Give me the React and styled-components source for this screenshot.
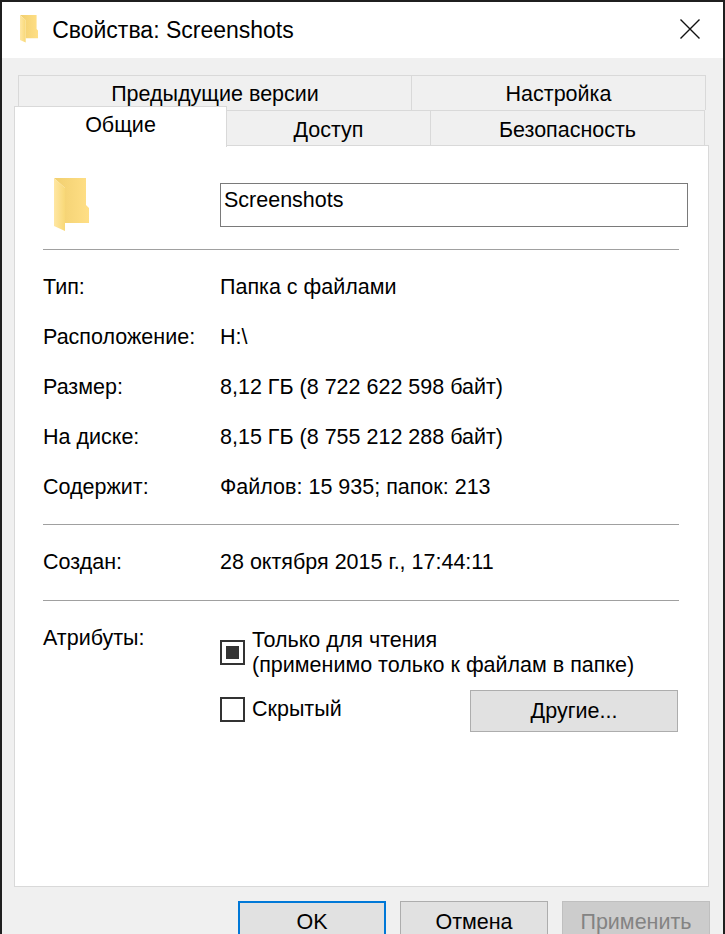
import styled, { createGlobalStyle } from "styled-components";

const GlobalStyle = createGlobalStyle`
  html, body {
    margin: 0;
    padding: 0;
    background: #1f1f1f;
  }
  * {
    box-sizing: border-box;
  }
`;

const App = () => {
  return (
    <>
      <GlobalStyle />
      <Screen>
        <Window>
          <TitleBar>
            <TitleGroup>
              <FolderIcon size={28} />
              <Title>Свойства: Screenshots</Title>
            </TitleGroup>
            <CloseIcon viewBox="0 0 20 20">
              <path d="M0.5 0.5 L19.5 19.5 M19.5 0.5 L0.5 19.5" stroke="#111" strokeWidth="1.4" fill="none" />
            </CloseIcon>
          </TitleBar>
          <Body>
            <BackTabs>
              <BackTab $first>Предыдущие версии</BackTab>
              <BackTab>Настройка</BackTab>
            </BackTabs>
            <FrontTabs>
              <ActiveTab>Общие</ActiveTab>
              <FrontTab>Доступ</FrontTab>
              <FrontTab $last>Безопасность</FrontTab>
            </FrontTabs>
            <Panel>
              <NameRow>
                <IconCell>
                  <FolderIcon size={54} />
                </IconCell>
                <NameField>Screenshots</NameField>
              </NameRow>
              <Divider />
              <InfoList>
                {info.map((row) => (
                  <InfoRow key={row.label}>
                    <span>{row.label}</span>
                    <span>{row.value}</span>
                  </InfoRow>
                ))}
              </InfoList>
              <Divider />
              <CreatedRow>
                <span>Создан:</span>
                <span>28 октября 2015 г., 17:44:11</span>
              </CreatedRow>
              <Divider />
              <Attributes>
                <AttrLabel>Атрибуты:</AttrLabel>
                <AttrOptions>
                  <ReadOnlyRow>
                    <CheckBox $mixed />
                    <CheckText>
                      Только для чтения
                      <br />
                      (применимо только к файлам в папке)
                    </CheckText>
                  </ReadOnlyRow>
                  <HiddenRow>
                    <HiddenCheck />
                    <HiddenText>Скрытый</HiddenText>
                    <OtherButton>Другие...</OtherButton>
                  </HiddenRow>
                </AttrOptions>
              </Attributes>
            </Panel>
            <Footer>
              <DialogButton $focused>OK</DialogButton>
              <DialogButton>Отмена</DialogButton>
              <DialogButton $disabled>Применить</DialogButton>
            </Footer>
          </Body>
        </Window>
      </Screen>
    </>
  );
};

const FolderIcon = ({ size }) => (
  <svg width={size * 35 / 54} height={size} viewBox="0 0 35 54">
    <defs>
      <linearGradient id={`back${size}`} x1="0" y1="0" x2="1" y2="0">
        <stop offset="0" stopColor="#f1cf6f" />
        <stop offset="1" stopColor="#ffdf86" />
      </linearGradient>
      <linearGradient id={`front${size}`} x1="0" y1="0" x2="1" y2="0">
        <stop offset="0" stopColor="#ffe7a3" />
        <stop offset="1" stopColor="#f8d877" />
      </linearGradient>
    </defs>
    <path d="M0 0 H32 V27 L35 30 V45 H11 V10 Z" fill={`url(#back${size})`} />
    <path d="M0 0 L11 10 V53 L0 48 Z" fill={`url(#front${size})`} />
  </svg>
);

const Screen = styled.div`
  width: 725px;
  height: 934px;
  overflow: hidden;
  padding: 2px 2px 0;
  background: #1f1f1f;
  font-family: "Liberation Sans", Arial, sans-serif;
  font-size: 21.5px;
  color: #000;
`;

const Window = styled.div`
  display: flex;
  flex-direction: column;
  height: 100%;
  background: #f0f0f0;
`;

const TitleBar = styled.div`
  display: flex;
  align-items: center;
  justify-content: space-between;
  flex: none;
  height: 56px;
  padding: 0 23px 2px 18px;
  background: #fff;
`;

const TitleGroup = styled.div`
  display: flex;
  align-items: center;
  gap: 14px;
`;

const Title = styled.span`
  margin-top: 3px;
  font-size: 23px;
`;

const CloseIcon = styled.svg`
  width: 20px;
  height: 20px;
`;

const Body = styled.div`
  display: flex;
  flex-direction: column;
  flex: 1;
  padding: 17px 14px 0 12px;
`;

const BackTabs = styled.div`
  display: grid;
  grid-template-columns: 394px 294px;
  height: 35px;
  margin-left: 4px;
`;

const BackTab = styled.div`
  display: flex;
  align-items: center;
  justify-content: center;
  padding-top: 3px;
  border: 1px solid #d9d9d9;
  border-left-width: ${({ $first }) => ($first ? "1px" : "0")};
  border-bottom: 0;
`;

const FrontTabs = styled.div`
  display: grid;
  grid-template-columns: 213px 204px 274px;
  height: 35px;
`;

const FrontTab = styled.div`
  display: flex;
  align-items: center;
  justify-content: center;
  padding-top: 2px;
  border-top: 1px solid #d9d9d9;
  border-right: 1px solid #d9d9d9;
`;

const ActiveTab = styled.div`
  position: relative;
  z-index: 1;
  display: flex;
  align-items: center;
  justify-content: center;
  height: 41px;
  margin-top: -4px;
  padding-bottom: 3px;
  background: #fff;
  border: 1px solid #d9d9d9;
  border-bottom: 0;
`;

const Panel = styled.div`
  flex: none;
  height: 742px;
  padding: 0 29px 0 28px;
  background: #fff;
  border: 1px solid #d9d9d9;
`;

const NameRow = styled.div`
  display: grid;
  grid-template-columns: 177px 468px;
  height: 103px;
  padding-top: 37px;
`;

const IconCell = styled.div`
  margin: -5px 0 0 11px;
`;

const NameField = styled.div`
  height: 44px;
  padding: 4px 3px;
  line-height: 24px;
  border: 1px solid #7a7a7a;
`;

const Divider = styled.div`
  height: 1px;
  width: 636px;
  background: #a0a0a0;
`;

const InfoList = styled.div`
  display: flex;
  flex-direction: column;
  padding: 12px 0 12px;
`;

const InfoRow = styled.div`
  display: grid;
  grid-template-columns: 177px 1fr;
  align-items: center;
  height: 50px;
`;

const CreatedRow = styled(InfoRow)`
  height: 75px;
`;

const Attributes = styled.div`
  display: grid;
  grid-template-columns: 177px 1fr;
  padding-top: 25px;
`;

const AttrLabel = styled.span`
  line-height: 25px;
`;

const AttrOptions = styled.div`
  display: flex;
  flex-direction: column;
`;

const ReadOnlyRow = styled.div`
  display: flex;
  align-items: center;
  gap: 7px;
`;

const HiddenRow = styled.div`
  display: flex;
  align-items: flex-start;
  gap: 7px;
  margin-top: 12px;
`;

const CheckText = styled.span`
  padding-top: 2px;
  line-height: 25px;
`;

const HiddenText = styled.span`
  width: 211px;
  margin-top: 7px;
  line-height: 25px;
`;

const CheckBox = styled.span`
  display: flex;
  align-items: center;
  justify-content: center;
  flex: none;
  width: 25px;
  height: 25px;
  border: 2px solid #333;
  background: #fff;

  &::after {
    content: "";
    display: ${({ $mixed }) => ($mixed ? "block" : "none")};
    width: 13px;
    height: 13px;
    background: #333;
  }
`;

const HiddenCheck = styled(CheckBox)`
  margin-top: 7px;
`;

const OtherButton = styled.div`
  display: flex;
  align-items: center;
  justify-content: center;
  width: 208px;
  height: 42px;
  background: #e1e1e1;
  border: 1px solid #adadad;
`;

const Footer = styled.div`
  display: flex;
  justify-content: flex-end;
  gap: 14px;
  padding-top: 14px;
  margin-right: -1px;
`;

const DialogButton = styled.div`
  display: flex;
  align-items: center;
  justify-content: center;
  flex: none;
  width: 148px;
  height: 42px;
  background: ${({ $disabled }) => ($disabled ? "#cccccc" : "#e1e1e1")};
  color: ${({ $disabled }) => ($disabled ? "#838383" : "#000")};
  border: ${({ $focused, $disabled }) =>
    $focused ? "2px solid #0078d7" : $disabled ? "1px solid #bfbfbf" : "1px solid #adadad"};
`;

const info = [
  { label: "Тип:", value: "Папка с файлами" },
  { label: "Расположение:", value: "H:\\" },
  { label: "Размер:", value: "8,12 ГБ (8 722 622 598 байт)" },
  { label: "На диске:", value: "8,15 ГБ (8 755 212 288 байт)" },
  { label: "Содержит:", value: "Файлов: 15 935; папок: 213" },
];

export default App;
